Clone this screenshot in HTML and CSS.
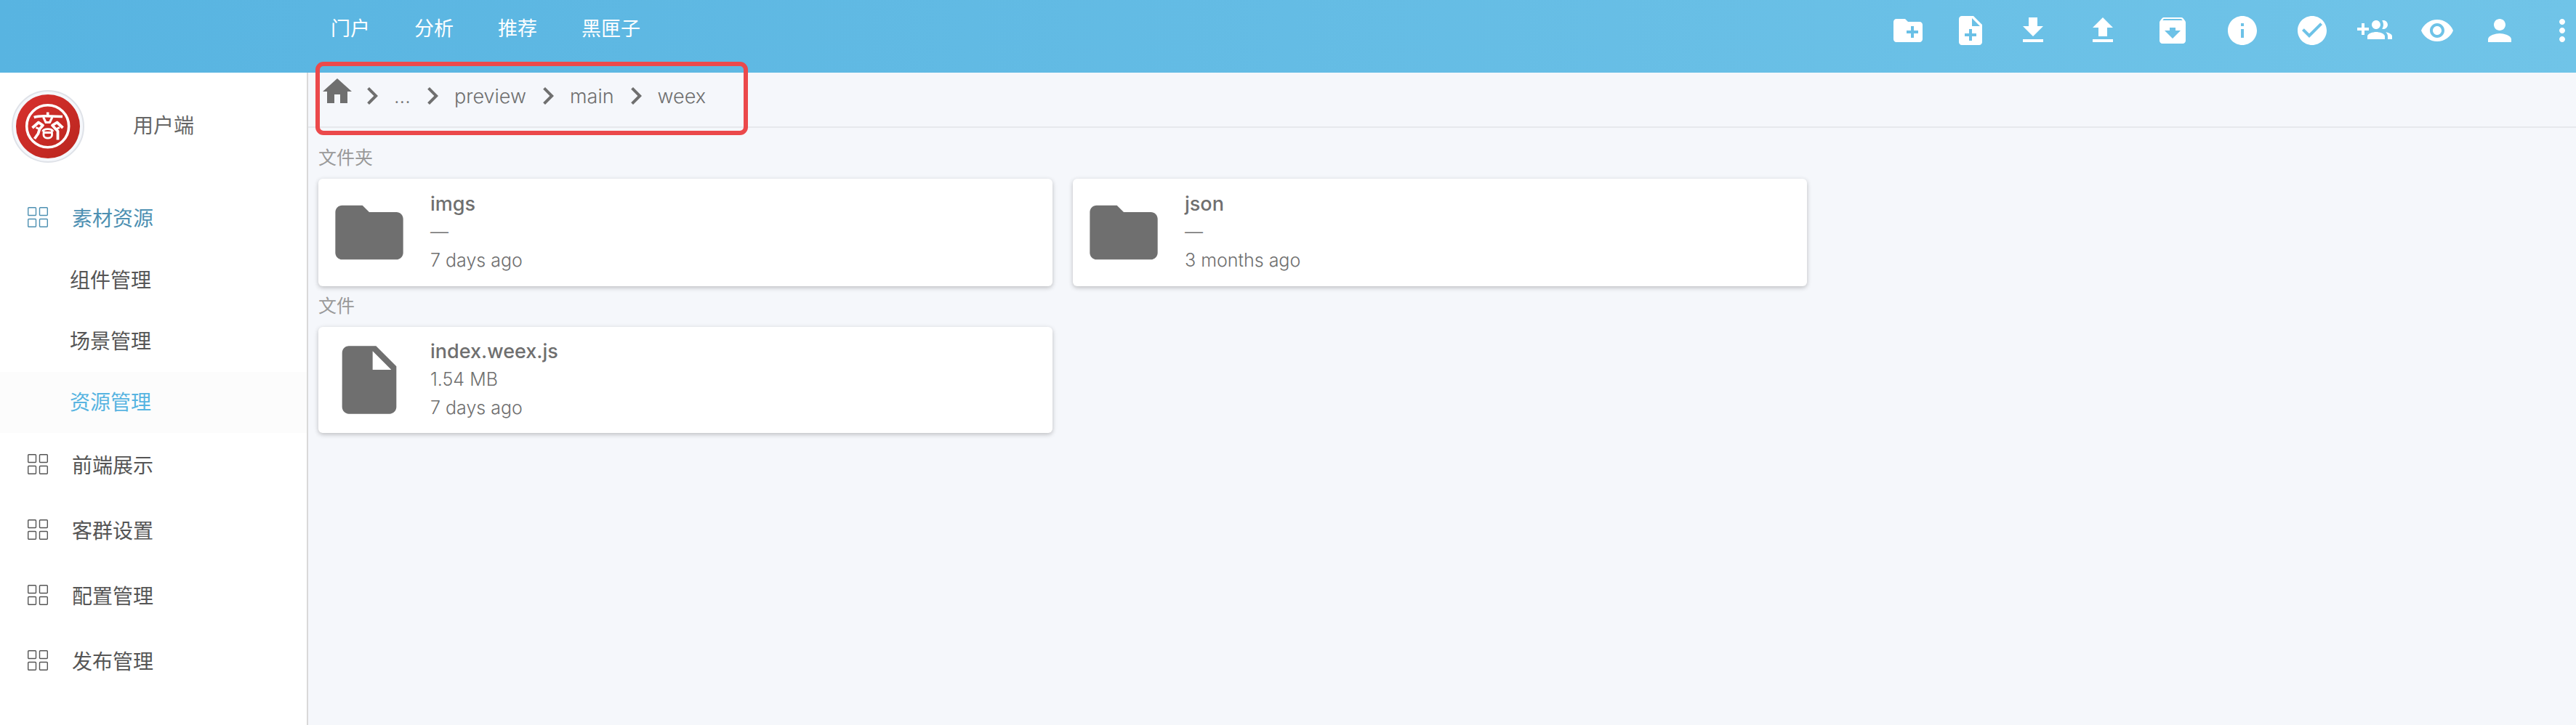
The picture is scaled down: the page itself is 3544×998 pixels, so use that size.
FILE: index.html
```html
<!DOCTYPE html>
<html lang="zh-CN">
<head>
<meta charset="utf-8">
<title>资源管理</title>
<link rel="stylesheet" href="styles.css">
</head>
<body>
<svg class="sprite" aria-hidden="true">
  <symbol id="grid" viewBox="0 0 28 28"><g fill="none" stroke="currentColor" stroke-width="1.4"><rect x=".7" y=".7" width="10.8" height="10.8" rx="1"/><rect x="16.5" y=".7" width="10.8" height="10.8" rx="1"/><rect x=".7" y="16.5" width="10.8" height="10.8" rx="1"/><rect x="16.5" y="16.5" width="10.8" height="10.8" rx="1"/></g></symbol>
  <symbol id="chevron" viewBox="0 0 24 24"><path d="M8.59 16.59L13.17 12 8.59 7.41 10 6l6 6-6 6-1.41-1.41z"/></symbol>
  <symbol id="folder" viewBox="0 0 24 24"><path d="M10 4H4c-1.1 0-1.99.9-1.99 2L2 18c0 1.1.9 2 2 2h16c1.1 0 2-.9 2-2V8c0-1.1-.9-2-2-2h-8l-2-2z"/></symbol>
  <symbol id="file" viewBox="0 0 24 24"><path d="M6 2c-1.1 0-1.99.9-1.99 2L4 20c0 1.1.89 2 1.99 2H18c1.1 0 2-.9 2-2V8l-6-6H6zm7 7V3.5L18.5 9H13z"/></symbol>
</svg>

<header class="topbar">
  <nav class="topnav">
    <a href="#">门户</a>
    <a href="#">分析</a>
    <a href="#">推荐</a>
    <a href="#">黑匣子</a>
  </nav>
  <div class="toolbar">
    <button type="button" aria-label="新建文件夹"><svg viewBox="0 0 24 24"><path d="M20 6h-8l-2-2H4c-1.11 0-1.99.89-1.99 2L2 18c0 1.11.89 2 2 2h16c1.11 0 2-.89 2-2V8c0-1.11-.89-2-2-2zm-1 8h-3v3h-2v-3h-3v-2h3V9h2v3h3v2z"/></svg></button>
    <button type="button" aria-label="新建文件"><svg viewBox="0 0 24 24"><path d="M14 2H6c-1.1 0-1.99.9-1.99 2L4 20c0 1.1.89 2 1.99 2H18c1.1 0 2-.9 2-2V8l-6-6zm2 14h-3v3h-2v-3H8v-2h3v-3h2v3h3v2zm-3-7V3.5L18.5 9H13z"/></svg></button>
    <button type="button" aria-label="下载"><svg viewBox="0 0 24 24"><path d="M19 9h-4V3H9v6H5l7 7 7-7zM5 18v2h14v-2H5z"/></svg></button>
    <button type="button" class="wide" aria-label="上传"><svg viewBox="0 0 24 24"><path d="M9 16h6v-6h4l-7-7-7 7h4zm-4 2h14v2H5z"/></svg></button>
    <button type="button" class="wide" aria-label="归档"><svg viewBox="0 0 24 24"><path d="M20.54 5.23l-1.39-1.68C18.88 3.21 18.47 3 18 3H6c-.47 0-.88.21-1.16.55L3.46 5.23C3.17 5.57 3 6.02 3 6.5V19c0 1.1.9 2 2 2h14c1.1 0 2-.9 2-2V6.5c0-.48-.17-.93-.46-1.27zM12 17.5L6.5 12H10v-2h4v2h3.5L12 17.5zM5.12 5l.81-1h12l.94 1H5.12z"/></svg></button>
    <button type="button" class="wide" aria-label="信息"><svg viewBox="0 0 24 24"><path d="M12 2C6.48 2 2 6.48 2 12s4.48 10 10 10 10-4.48 10-10S17.52 2 12 2zm1 15h-2v-6h2v6zm0-8h-2V7h2v2z"/></svg></button>
    <button type="button" class="wide" aria-label="选择"><svg viewBox="0 0 24 24"><path d="M12 2C6.48 2 2 6.48 2 12s4.48 10 10 10 10-4.48 10-10S17.52 2 12 2zm-2 15l-5-5 1.41-1.41L10 14.17l7.59-7.59L19 8l-9 9z"/></svg></button>
    <button type="button" aria-label="添加成员"><svg viewBox="0 0 24 24"><path d="M8 10H5V7H3v3H0v2h3v3h2v-3h3v-2zm10 1c1.66 0 2.99-1.34 2.99-3S19.66 5 18 5c-.32 0-.63.05-.91.14.57.81.9 1.79.9 2.86s-.34 2.04-.9 2.86c.28.09.59.14.91.14zm-5 0c1.66 0 2.99-1.34 2.99-3S14.66 5 13 5c-1.66 0-3 1.34-3 3s1.34 3 3 3zm6.62 2.16c.83.73 1.38 1.66 1.38 2.84v2h3v-2c0-1.54-2.37-2.49-4.38-2.84zM13 13c-2 0-6 1-6 3v2h12v-2c0-2-4-3-6-3z"/></svg></button>
    <button type="button" aria-label="预览"><svg viewBox="0 0 24 24"><path d="M12 4.5C7 4.5 2.73 7.61 1 12c1.73 4.39 6 7.5 11 7.5s9.27-3.11 11-7.5c-1.73-4.39-6-7.5-11-7.5zM12 17c-2.76 0-5-2.24-5-5s2.24-5 5-5 5 2.24 5 5-2.24 5-5 5zm0-8c-1.66 0-3 1.34-3 3s1.34 3 3 3 3-1.34 3-3-1.34-3-3-3z"/></svg></button>
    <button type="button" aria-label="用户"><svg viewBox="0 0 24 24"><path d="M12 12c2.21 0 4-1.79 4-4s-1.79-4-4-4-4 1.79-4 4 1.79 4 4 4zm0 2c-2.67 0-8 1.34-8 4v2h16v-2c0-2.66-5.33-4-8-4z"/></svg></button>
    <button type="button" class="more" aria-label="更多"><svg viewBox="2.5 0 19 24"><path d="M12 8c1.1 0 2-.9 2-2s-.9-2-2-2-2 .9-2 2 .9 2 2 2zm0 2c-1.1 0-2 .9-2 2s.9 2 2 2 2-.9 2-2-.9-2-2-2zm0 6c-1.1 0-2 .9-2 2s.9 2 2 2 2-.9 2-2-.9-2-2-2z"/></svg></button>
  </div>
</header>

<div class="layout">
  <aside class="sidebar">
    <div class="profile">
      <span class="avatar">
        <svg viewBox="0 0 88 88" aria-hidden="true">
          <defs><linearGradient id="red" x1="0" y1="0" x2="1" y2="1"><stop offset="0" stop-color="#d9302e"/><stop offset="1" stop-color="#b9261e"/></linearGradient></defs>
          <circle cx="44" cy="44" r="44" fill="url(#red)"/>
          <g fill="none" stroke="#fff" stroke-width="3.6" stroke-linejoin="round">
            <circle cx="43.7" cy="43.7" r="29"/>
            <path d="M24.7 31.5C32 29 42 29.5 64 30.5M43.7 24.5v5"/>
            <path d="M37.5 31l3.5 7.5h5.5l3.5-7.5" stroke-width="3"/>
            <path d="M22.5 46l8.500-7.500 6 4-4.500 5-2 6.500-5 7" stroke-width="3.8"/>
            <path d="M27.5 45.5l5.500 2.500" stroke-width="2.8"/>
            <path d="M64.5 46l-8-7.500-6.500 4 4.500 5 3 3v12" stroke-width="3.8"/>
            <path d="M60 45.500l-5.500 2.500" stroke-width="2.8"/>
            <path d="M36.500 51c2-4.500 12.500-4.500 14.500 0M38 50v6c0 5.500 11.500 5.500 11.500 0v-6M39 52.500h9.500" stroke-width="2.8"/>
          </g>
        </svg>
      </span>
      <span class="profile-name">用户端</span>
    </div>
    <nav class="menu">
      <a class="menu-item is-open" href="#"><svg><use href="#grid"/></svg>素材资源</a>
      <a class="menu-sub" href="#">组件管理</a>
      <a class="menu-sub" href="#">场景管理</a>
      <a class="menu-sub is-active" href="#">资源管理</a>
      <a class="menu-item" href="#"><svg><use href="#grid"/></svg>前端展示</a>
      <a class="menu-item" href="#"><svg><use href="#grid"/></svg>客群设置</a>
      <a class="menu-item" href="#"><svg><use href="#grid"/></svg>配置管理</a>
      <a class="menu-item" href="#"><svg><use href="#grid"/></svg>发布管理</a>
    </nav>
  </aside>

  <main class="content">
    <nav class="crumbs">
      <a class="home" href="#" aria-label="首页"><svg viewBox="0 0 24 24"><path d="M10 20v-6h4v6h5v-8h3L12 3 2 12h3v8z"/></svg></a>
      <svg><use href="#chevron"/></svg>
      <a href="#">...</a>
      <svg><use href="#chevron"/></svg>
      <a href="#">preview</a>
      <svg><use href="#chevron"/></svg>
      <a href="#">main</a>
      <svg><use href="#chevron"/></svg>
      <a href="#">weex</a>
      <span class="marker"></span>
    </nav>

    <section class="listing">
      <h2>文件夹</h2>
      <div class="cards">
        <a class="card" href="#">
          <svg><use href="#folder"/></svg>
          <span class="info"><strong>imgs</strong><span>—</span><span>7 days ago</span></span>
        </a>
        <a class="card" href="#">
          <svg><use href="#folder"/></svg>
          <span class="info"><strong>json</strong><span>—</span><span>3 months ago</span></span>
        </a>
      </div>
      <h2>文件</h2>
      <div class="cards files">
        <a class="card" href="#">
          <svg><use href="#file"/></svg>
          <span class="info"><strong>index.weex.js</strong><span>1.54 MB</span><span>7 days ago</span></span>
        </a>
      </div>
    </section>
  </main>
</div>
</body>
</html>
```
FILE: styles.css
```css
* {
  box-sizing: border-box;
}

body {
  margin: 0;
  min-height: 100vh;
  display: flex;
  flex-direction: column;
  font-family: Inter, "Noto Sans CJK SC", sans-serif;
  font-size: 28px;
  font-weight: 400;
  color: #555;
  background: #f5f7fb;
}

a {
  color: inherit;
  text-decoration: none;
}

.sprite {
  display: none;
}

.topbar {
  display: flex;
  justify-content: space-between;
  align-items: flex-start;
  height: 100px;
  padding-left: 455px;
  background: linear-gradient(90deg, #58b4e1, #70c4e8);
}

.topnav {
  display: flex;
  gap: 61px;
  padding-top: 20px;
  font-size: 27px;
  line-height: 40px;
  color: #fff;
}

.toolbar {
  display: flex;
  gap: 38px;
  padding-top: 18px;
}

.toolbar button {
  display: flex;
  justify-content: flex-end;
  padding: 0;
  border: 0;
  background: none;
  color: #fff;
}

.toolbar svg {
  width: 48px;
  height: 48px;
  fill: currentColor;
}

.toolbar .wide {
  padding-left: 10px;
}

.toolbar .more {
  padding-left: 5px;
}

.toolbar .more svg {
  width: 38px;
}

.layout {
  flex: 1;
  display: flex;
}

.sidebar {
  flex: 0 0 424px;
  border-right: 2px solid #d9d9d9;
  background: #fff;
}

.profile {
  display: flex;
  align-items: center;
  gap: 67px;
  padding: 24px 16px 30px;
  color: #666;
}

.avatar {
  width: 100px;
  height: 100px;
  padding: 4px;
  border: 2px solid #dfe2e8;
  border-radius: 50%;
  background: #f5f7fb;
}

.avatar svg {
  display: block;
}

.profile-name {
  padding-bottom: 6px;
}

.menu-item {
  display: flex;
  align-items: center;
  height: 90px;
  gap: 33px;
  padding: 0 0 4px 38px;
}

.menu-item svg {
  width: 28px;
  height: 28px;
}

.menu-item.is-open {
  padding-bottom: 0;
  color: #4d90b2;
}

.menu-sub {
  display: flex;
  align-items: center;
  height: 84px;
  padding: 0 0 4px 96px;
}

.menu-sub.is-active {
  color: #57b4e1;
  background: #fcfcfc;
}

.content {
  flex: 1;
  min-width: 0;
  color: #6f6f6f;
}

.crumbs {
  position: relative;
  display: flex;
  align-items: center;
  height: 76px;
  padding: 0 16px 10px;
  border-bottom: 2px solid #e7e9ed;
  font-size: 27px;
  font-weight: 300;
}

.crumbs a {
  padding: 0 6px;
}

.crumbs .home {
  padding: 0 0 12px;
}

.crumbs svg {
  display: block;
  width: 48px;
  height: 48px;
  fill: #6f6f6f;
}

.marker {
  position: absolute;
  left: 10px;
  top: -15px;
  width: 595px;
  height: 101px;
  border: 6px solid #eb494b;
  border-radius: 11px;
  pointer-events: none;
}

.listing {
  padding: 14px 20px 14px 14px;
}

.listing h2 {
  margin: 0;
  height: 56px;
  font-size: 25px;
  font-weight: 400;
  line-height: 54px;
  color: #999;
}

.cards {
  display: grid;
  grid-template-columns: repeat(3, 1fr);
  gap: 28px;
}

.card {
  display: flex;
  align-items: center;
  gap: 28px;
  height: 148px;
  padding: 0 14px;
  border-radius: 6px;
  background: #fff;
  box-shadow: 0 2px 6px rgba(0, 0, 0, 0.24);
}

.files .card {
  height: 146px;
}

.card svg {
  width: 112px;
  height: 112px;
  fill: #6f6f6f;
}

.info {
  display: flex;
  flex-direction: column;
  padding-bottom: 2px;
  font-size: 25px;
  font-weight: 300;
  line-height: 39px;
}

.info strong {
  font-size: 27px;
  font-weight: 500;
}
```
